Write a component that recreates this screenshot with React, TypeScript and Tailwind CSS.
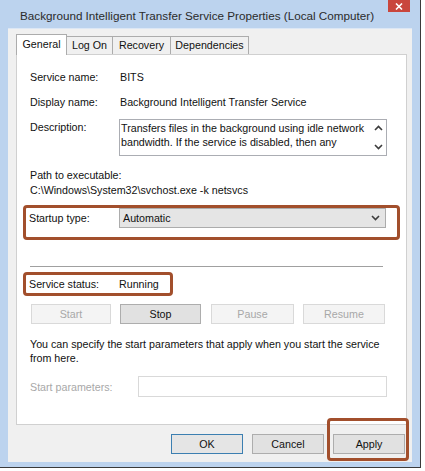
import React from "react";

const font = { fontFamily: '"Liberation Sans", Arial, sans-serif' };

function Chevron({ up = false }: { up?: boolean }) {
  return (
    <svg width="9" height="6" viewBox="0 0 9 6" className="block">
      <polyline
        points={up ? "1,5 4.5,1.5 8,5" : "1,1 4.5,4.5 8,1"}
        fill="none"
        stroke="#3c3c3c"
        strokeWidth="1.6"
      />
    </svg>
  );
}

function Btn({
  label,
  w,
  disabled = false,
  primary = false,
}: {
  label: string;
  w: string;
  disabled?: boolean;
  primary?: boolean;
}) {
  const base = "h-[20px] flex items-center justify-center text-[10.7px] border";
  const look = disabled
    ? "bg-[#f4f4f4] border-[#d9d9d9] text-[#a8a8a8]"
    : primary
    ? "bg-[#e5e5e5] border-[#3c7fb1] text-[#111]"
    : "bg-[#e1e1e1] border-[#adadad] text-[#111]";
  return <div className={`${base} ${look} ${w}`}>{label}</div>;
}

export default function App() {
  return (
    <div className="w-[425px] h-[471px] bg-white overflow-hidden" style={font}>
      <div className="w-[421px] h-[468px] bg-[#bcd3ee] border-r border-b border-[#3a3a3a] flex flex-col relative">
        {/* title bar */}
        <div className="h-[28px] flex items-start shrink-0">
          <div className="pl-[20px] pt-[7px] text-[11.7px] text-[#2b2b2b] whitespace-nowrap">
            Background Intelligent Transfer Service Properties (Local Computer)
          </div>
          <div className="ml-auto mr-[10px] shrink-0 w-[22px] h-[12px] bg-[#c9463d] flex items-center justify-center">
            <svg width="8" height="7" viewBox="0 0 8 7">
              <path d="M1 0.5 L7 6.5 M7 0.5 L1 6.5" stroke="#fff" strokeWidth="1.6" />
            </svg>
          </div>
        </div>

        {/* client area */}
        <div className="mx-[8px] h-[434px] bg-[#f0f0f0] border-t border-[#dce7f5] flex flex-col relative">
          {/* tabs */}
          <div className="flex items-end pl-[8px] pt-[3px] h-[25px] text-[10.7px] text-[#111]">
            <div className="h-[21px] w-[51px] bg-white border border-b-0 border-[#acacac] flex items-center justify-center relative z-10 -mb-px pb-[2px]">
              General
            </div>
            <div className="h-[18px] w-[46px] bg-[#f0f0f0] border border-l-0 border-b-0 border-[#acacac] flex items-center justify-center">
              Log On
            </div>
            <div className="h-[18px] w-[58px] bg-[#f0f0f0] border border-l-0 border-b-0 border-[#acacac] flex items-center justify-center">
              Recovery
            </div>
            <div className="h-[18px] w-[78px] bg-[#f0f0f0] border border-l-0 border-b-0 border-[#acacac] flex items-center justify-center">
              Dependencies
            </div>
          </div>

          {/* tab panel */}
          <div className="ml-[8px] w-[391px] h-[371px] bg-white border border-[#d0d0d0] pl-[13px] text-[10.7px] text-[#111] leading-[14px]">
            <div className="mt-[15px] flex">
              <div className="w-[90px]">Service name:</div>
              <div>BITS</div>
            </div>
            <div className="mt-[11px] flex">
              <div className="w-[90px]">Display name:</div>
              <div>Background Intelligent Transfer Service</div>
            </div>
            <div className="mt-[9px] flex">
              <div className="w-[89px] pt-[2px]">Description:</div>
              <div className="mt-[1px] w-[268px] h-[37px] border border-[#abadb3] flex">
                <div className="flex-1 pl-[1px] pt-[1px] leading-[14px]">
                  Transfers files in the background using idle network bandwidth. If the service is disabled, then any
                </div>
                <div className="w-[16px] flex flex-col items-center justify-between py-[5px]">
                  <Chevron up />
                  <Chevron />
                </div>
              </div>
            </div>
            <div className="mt-[12px]">Path to executable:</div>
            <div className="mt-[1px]">C:\Windows\System32\svchost.exe -k netsvcs</div>

            {/* startup type (highlighted) */}
            <div className="mt-[8px] -ml-[7px] w-[377px] h-[35px] border-[3px] border-[#a24f2c] rounded-[4px] flex items-start">
              <div className="w-[93px] pl-[3px] h-[20px] flex items-center">Startup type:</div>
              <div className="w-[267px] h-[20px] bg-[#e5e5e5] border border-[#acacac] flex items-center pl-[3px] pr-[5px]">
                <div className="flex-1">Automatic</div>
                <Chevron />
              </div>
            </div>

            <div className="mt-[26px] w-[353px] h-px bg-[#a0a0a0]" />

            {/* service status (highlighted) */}
            <div className="mt-[5px] -ml-[7px] w-[150px] h-[24px] border-[3px] border-[#a24f2c] rounded-[4px] flex items-center">
              <div className="w-[93px] pl-[3px]">Service status:</div>
              <div>Running</div>
            </div>

            <div className="mt-[8px] flex ml-[1px]">
              <Btn label="Start" w="w-[80px]" disabled />
              <div className="w-[9px]" />
              <Btn label="Stop" w="w-[81px]" />
              <div className="w-[10px]" />
              <Btn label="Pause" w="w-[83px]" disabled />
              <div className="w-[9px]" />
              <Btn label="Resume" w="w-[82px]" disabled />
            </div>

            <div className="mt-[13px] w-[360px]">
              You can specify the start parameters that apply when you start the service from here.
            </div>

            <div className="mt-[11px] flex items-center">
              <div className="w-[108px] text-[#a8a8a8]">Start parameters:</div>
              <div className="w-[249px] h-[21px] border border-[#d9d9d9] bg-white" />
            </div>
          </div>

          {/* dialog buttons */}
          <div className="mt-[9px] flex pl-[163px]">
            <Btn label="OK" w="w-[72px]" primary />
            <div className="w-[9px]" />
            <Btn label="Cancel" w="w-[72px]" />
            <div className="w-[9px]" />
            <Btn label="Apply" w="w-[72px]" />
          </div>

          {/* highlight around Apply */}
          <div className="absolute left-[319px] top-[389px] w-[82px] h-[43px] border-[3px] border-[#a24f2c] rounded-[4px]" />
        </div>
      </div>
    </div>
  );
}
